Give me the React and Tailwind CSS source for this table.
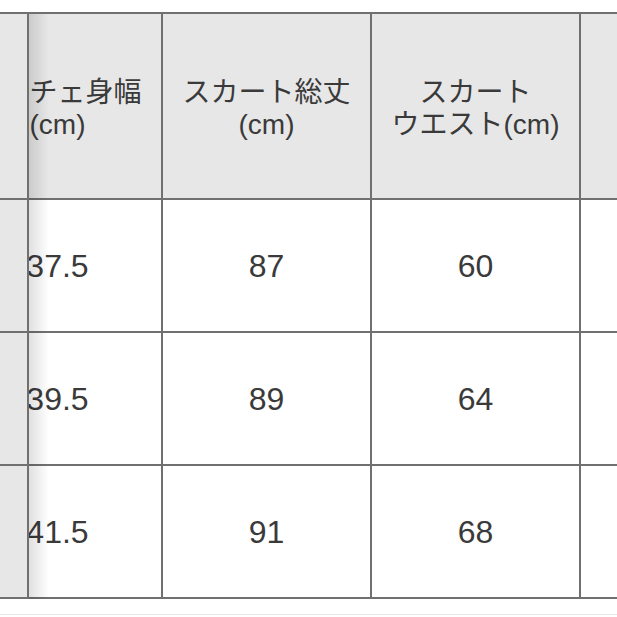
const columns = [
  { label: ["ビスチェ身幅", "(cm)"], values: ["37.5", "39.5", "41.5"] },
  { label: ["スカート総丈", "(cm)"], values: ["87", "89", "91"] },
  { label: ["スカート", "ウエスト(cm)"], values: ["60", "64", "68"] },
  { label: ["スカート", "ヒップ(cm)"], values: ["", "", ""] },
];

const rows = [0, 1, 2];

const App = () => {
  return (
    <div className="w-[617px] h-[617px] bg-white overflow-hidden text-[#3a3a3a]">
      <div className="pt-[12px]">
        <div className="flex border-t-2 border-[#707070]">
          {/* fixed first column, only its right edge is in view */}
          <div className="w-[29px] shrink-0 flex flex-col bg-[#e7e7e7] border-r-2 border-[#707070]">
            <div className="h-[186px] border-b-2 border-[#707070]" />
            {rows.map((r) => (
              <div key={r} className="h-[133px] border-b-2 border-[#707070]" />
            ))}
          </div>

          <div className="relative flex-1 overflow-hidden">
            <div className="ml-[-75px] w-max">
              <div className="flex bg-[#e7e7e7]">
                {columns.map((col, i) => (
                  <div
                    key={i}
                    className="w-[209px] h-[186px] shrink-0 flex flex-col items-center justify-center border-r-2 border-b-2 border-[#707070] font-['Liberation_Sans','Noto_Sans_CJK_JP',sans-serif] text-[28px] leading-[32px] text-center pt-[6px]"
                  >
                    <span className="whitespace-nowrap">{col.label[0]}</span>
                    <span className="whitespace-nowrap">{col.label[1]}</span>
                  </div>
                ))}
              </div>
              {rows.map((r) => (
                <div key={r} className="flex bg-white">
                  {columns.map((col, i) => (
                    <div
                      key={i}
                      className="w-[209px] h-[133px] shrink-0 flex items-center justify-center border-r-2 border-b-2 border-[#707070] font-['Liberation_Sans',Arial,sans-serif] text-[32px]"
                    >
                      {col.values[r]}
                    </div>
                  ))}
                </div>
              ))}
            </div>
            {/* shadow cast by the fixed column */}
            <div className="absolute left-0 top-0 bottom-0 w-[20px] bg-gradient-to-r from-[rgba(0,0,0,0.12)] to-transparent" />
          </div>
        </div>
        <div className="mt-[15px] border-t border-[#e8e8e8]" />
      </div>
    </div>
  );
};

export default App;
